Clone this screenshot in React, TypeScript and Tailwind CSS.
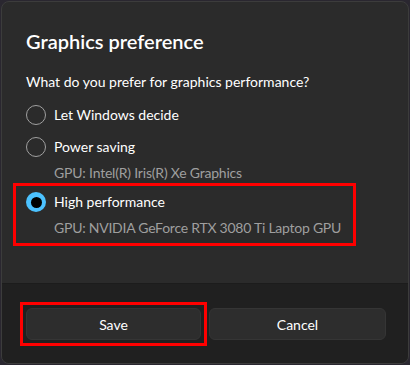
import React from 'react';

const font = { fontFamily: '"Segoe UI", Lato, "Noto Sans", sans-serif' };

function Radio({ checked }: { checked?: boolean }) {
  if (checked) {
    return (
      <span className="w-5 h-5 rounded-full bg-[#4cc2ff] flex items-center justify-center shrink-0">
        <span className="w-[11px] h-[11px] rounded-full bg-black" />
      </span>
    );
  }
  return <span className="w-5 h-5 rounded-full border border-[#a0a0a0] shrink-0" />;
}

function Option({ label, checked }: { label: string; checked?: boolean }) {
  return (
    <div className="flex items-center h-8 gap-2">
      <Radio checked={checked} />
      <span className="text-[14px] text-white leading-5">{label}</span>
    </div>
  );
}

export default function App() {
  return (
    <div className="w-[410px] h-[365px] bg-[#2a2730] p-px" style={font}>
      <div className="h-full rounded-lg overflow-hidden border border-[#3c3c3c] bg-[#2b2b2b] flex flex-col">
        <div className="flex-1 pl-6 pr-6 pt-[25px]">
          <h1 className="text-[20px] leading-7 font-semibold text-white">Graphics preference</h1>
          <p className="mt-[17px] text-[14px] leading-5 text-white">What do you prefer for graphics performance?</p>
          <div className="mt-[7px]">
            <Option label="Let Windows decide" />
            <Option label="Power saving" />
            <p className="pl-[28px] text-[14px] leading-5 text-[#9f9f9f] tracking-[-0.2px]">GPU: Intel(R) Iris(R) Xe Graphics</p>
            <div className="-ml-[13px] mr-[28px] border-[3px] border-[#ff0000] pl-[10px] pb-[5px]">
              <Option label="High performance" checked />
              <p className="pl-[28px] text-[14px] leading-5 text-[#9f9f9f] whitespace-nowrap tracking-[-0.25px]">GPU: NVIDIA GeForce RTX 3080 Ti Laptop GPU</p>
            </div>
          </div>
        </div>
        <div className="h-[80px] bg-[#202020] border-t border-[#1c1c1c] pl-6 pr-[22px] pt-6 flex items-start gap-2">
          <div className="relative flex-1 h-8">
            <button className="w-full h-8 rounded-md bg-[#2d2d2d] border border-[#353535] text-white text-[14px]">Save</button>
            <div className="absolute -left-[6px] -right-[6px] -top-[6px] -bottom-[6px] border-[3px] border-[#ff0000]" />
          </div>
          <button className="flex-1 h-8 rounded-md bg-[#2d2d2d] border border-[#353535] text-white text-[14px]">Cancel</button>
        </div>
      </div>
    </div>
  );
}
